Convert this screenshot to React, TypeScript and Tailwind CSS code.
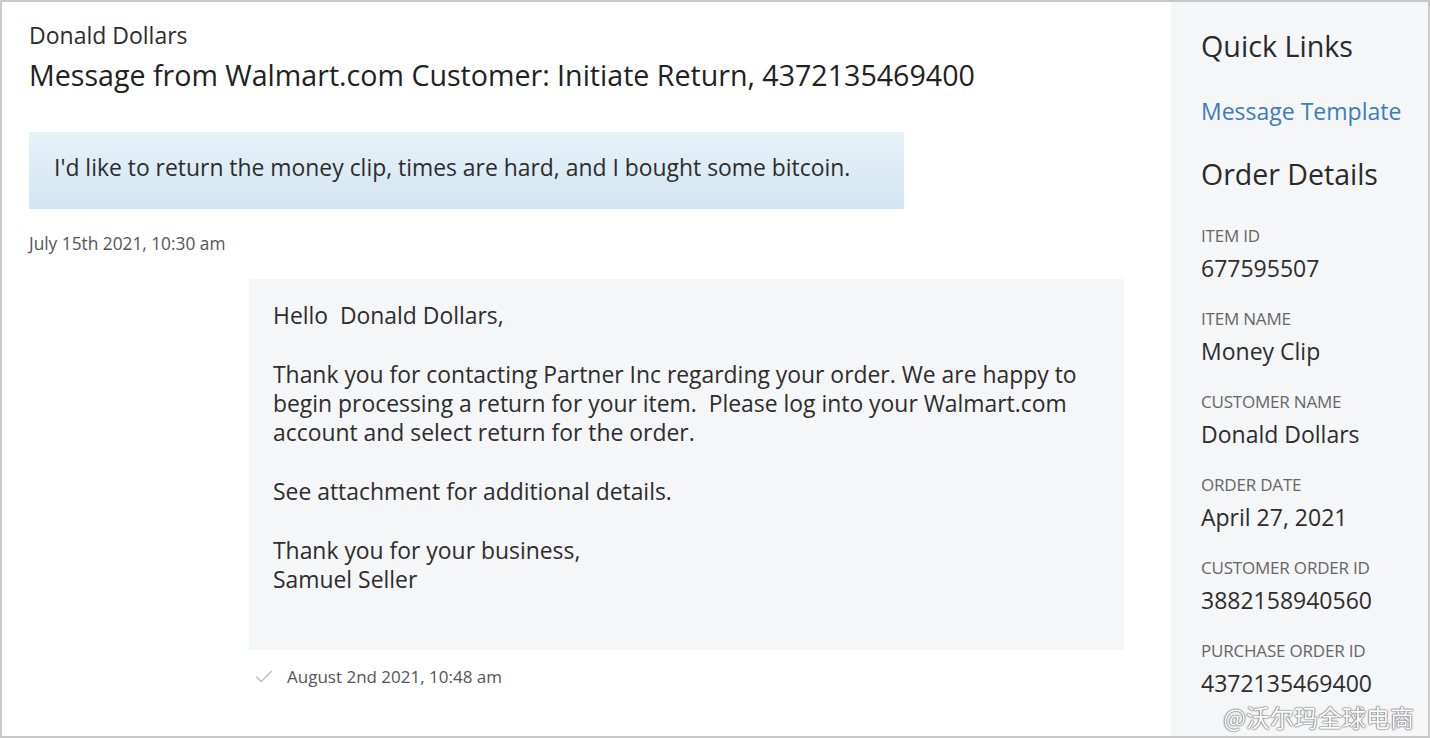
import { Check } from 'lucide-react';

const details = [
  { label: 'ITEM ID', value: '677595507' },
  { label: 'ITEM NAME', value: 'Money Clip' },
  { label: 'CUSTOMER NAME', value: 'Donald Dollars' },
  { label: 'ORDER DATE', value: 'April 27, 2021' },
  { label: 'CUSTOMER ORDER ID', value: '3882158940560' },
  { label: 'PURCHASE ORDER ID', value: '4372135469400' },
];

const App: React.FC = () => {
  return (
    <div className="w-[1430px] h-[738px] overflow-hidden bg-white border-2 border-[#c8c8c8] flex font-['Open_Sans',sans-serif] text-[#2d2d2d]">
      {/* conversation */}
      <div className="flex-1 pl-[27px] pt-[21px]">
        <div className="text-[23px] leading-[24px]">Donald Dollars</div>
        <h1 className="mt-[11px] text-[28.6px] leading-[34px] text-[#222]">
          Message from Walmart.com Customer: Initiate Return, 4372135469400
        </h1>

        <div className="mt-[40px] w-[875px] h-[77px] flex items-center pl-[25px] pb-[5px] bg-gradient-to-b from-[#e7f2f9] to-[#d2e5f2] text-[22.9px]">
          I'd like to return the money clip, times are hard, and I bought some bitcoin.
        </div>
        <div className="mt-[25px] text-[17.3px] leading-[20px] text-[#555]">July 15th 2021, 10:30 am</div>

        <div className="mt-[25px] ml-[220px] w-[875px] h-[371px] bg-[#f5f6f8] pl-[24px] pt-[22px] text-[22.9px] leading-[29px]">
          <p>Hello&nbsp; Donald Dollars,</p>
          <p className="mt-[30px]">
            Thank you for contacting Partner Inc regarding your order. We are happy to
            <br />
            begin processing a return for your item.&nbsp; Please log into your Walmart.com
            <br />
            account and select return for the order.
          </p>
          <p className="mt-[30px]">See attachment for additional details.</p>
          <p className="mt-[30px]">
            Thank you for your business,
            <br />
            Samuel Seller
          </p>
        </div>

        <div className="ml-[224px] mt-[16px] flex items-center gap-[12px] text-[17px] leading-[20px] text-[#555]">
          <Check className="w-[22px] h-[22px] text-[#b5b5b5]" strokeWidth={1.4} />
          <span>August 2nd 2021, 10:48 am</span>
        </div>
      </div>

      {/* sidebar */}
      <aside className="relative w-[257px] bg-[#f5f6f8] pl-[30px] pt-[26px]">
        <h2 className="text-[28.7px] leading-[36px] text-[#2a2a2a]">Quick Links</h2>
        <a className="block mt-[33px] text-[23px] leading-[28px] text-[#3d7cc1]">Message Template</a>
        <h2 className="mt-[31px] text-[28.5px] leading-[36px] text-[#2a2a2a]">Order Details</h2>

        <div className="mt-[34px] flex flex-col">
          {details.map((d) => (
            <div key={d.label} className="h-[83px]">
              <div className="text-[17px] leading-[20px] text-[#666] tracking-[-0.2px]">{d.label}</div>
              <div className="mt-[8px] text-[23px] leading-[28px] text-[#2d2d2d]">{d.value}</div>
            </div>
          ))}
        </div>

        <div className="absolute right-[14px] bottom-[4px] text-[24px] leading-[30px] text-white font-['Noto_Sans_CJK_SC',sans-serif] [text-shadow:0_0_2px_#666,0_0_1px_#666,0_0_1px_#666]">
          @沃尔玛全球电商
        </div>
      </aside>
    </div>
  );
};

export default App;
